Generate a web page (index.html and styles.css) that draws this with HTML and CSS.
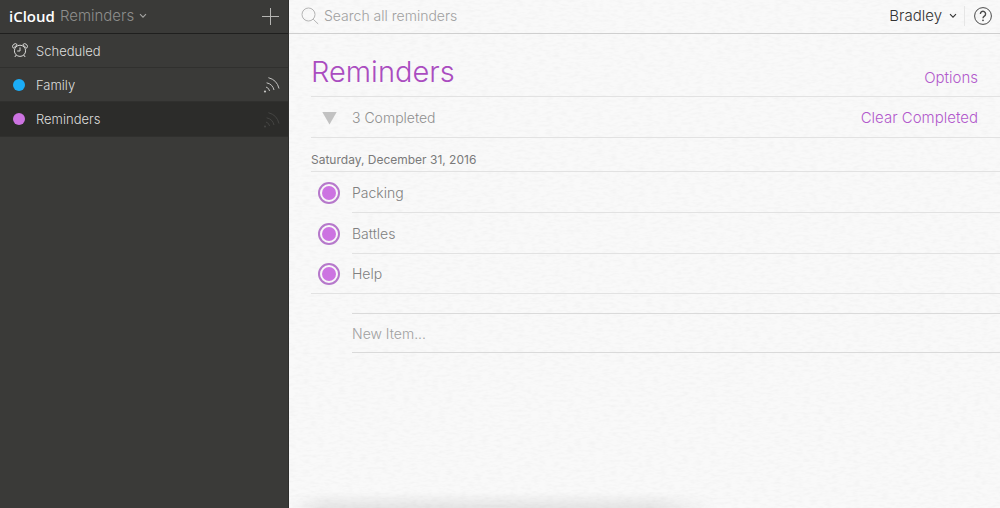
FILE: index.html
```html
<!DOCTYPE html>
<html lang="en">
<head>
<meta charset="utf-8">
<meta name="viewport" content="width=device-width, initial-scale=1">
<title>iCloud Reminders</title>
<link rel="stylesheet" href="styles.css">
</head>
<body>
<div class="app">
  <aside class="sidebar">
    <header class="sidebar-head">
      <button class="switcher" type="button">
        <span class="brand">iCloud</span>
        <span class="app-name">Reminders</span>
        <svg class="chevron" viewBox="0 0 8 6" aria-hidden="true"><path d="M1 1.2 4 4.2 7 1.2"/></svg>
      </button>
      <button class="add" type="button" aria-label="New list">
        <svg viewBox="0 0 17 17" aria-hidden="true"><path d="M8.5 0v17M0 8.5h17"/></svg>
      </button>
    </header>
    <nav class="lists" aria-label="Lists">
      <a class="list" href="#scheduled">
        <svg class="alarm" viewBox="0 0 16 15" aria-hidden="true">
          <circle cx="8" cy="7.8" r="5.6"/>
          <path d="M8 4.4V8H5.2M4.3 12 2.8 14M11.7 12l1.5 2"/>
          <path d="M1.3 5.2A2.4 2.4 0 1 1 5.2 1.6ZM14.7 5.2A2.4 2.4 0 1 0 10.8 1.6Z"/>
        </svg>
        <span class="list-name">Scheduled</span>
      </a>
      <a class="list" href="#family">
        <span class="dot dot-blue"></span>
        <span class="list-name">Family</span>
        <svg class="shared" viewBox="0 0 17 17" aria-hidden="true"><circle cx="2" cy="15.5" r="1.1"/><path d="M3 11a5.2 5.2 0 0 1 3.600 4M3.600 6.800A9.600 9.600 0 0 1 11 14M5.400 1.700A14.500 14.500 0 0 1 16 12.500"/></svg>
      </a>
      <a class="list list-current" href="#reminders" aria-current="page">
        <span class="dot dot-purple"></span>
        <span class="list-name">Reminders</span>
        <svg class="shared shared-off" viewBox="0 0 17 17" aria-hidden="true"><circle cx="2" cy="15.5" r="1.1"/><path d="M3 11a5.2 5.2 0 0 1 3.600 4M3.600 6.800A9.600 9.600 0 0 1 11 14M5.400 1.700A14.500 14.500 0 0 1 16 12.500"/></svg>
      </a>
    </nav>
  </aside>

  <main class="page">
    <svg class="paper" aria-hidden="true">
      <filter id="grain" x="0" y="0" width="100%" height="100%">
        <feTurbulence type="fractalNoise" baseFrequency="0.14 0.4" numOctaves="2" seed="4"/>
        <feColorMatrix values="0 0 0 0 0.5  0 0 0 0 0.5  0 0 0 0 0.5  0.2 0 0 0 -0.08"/>
      </filter>
      <rect width="100%" height="100%" filter="url(#grain)"/>
    </svg>
    <header class="topbar">
      <label class="search">
        <svg class="lens" viewBox="0 0 18 18" aria-hidden="true"><circle cx="7.5" cy="7.5" r="6.5"/><path d="m12.2 12.2 5 4.8"/></svg>
        <input class="search-input" type="search" placeholder="Search all reminders" aria-label="Search all reminders">
      </label>
      <button class="account" type="button">
        <span>Bradley</span>
        <svg class="chevron" viewBox="0 0 8 6" aria-hidden="true"><path d="M1 1.2 4 4.2 7 1.2"/></svg>
      </button>
      <button class="help" type="button" aria-label="Help">
        <svg viewBox="0 0 18 18" aria-hidden="true"><circle cx="9" cy="9" r="8.4"/><path class="mark" d="M6.4 7a2.6 2.6 0 1 1 4 2.1C9.5 9.7 9 10 9 11.2"/><circle class="point" cx="9" cy="13.3" r=".9"/></svg>
      </button>
    </header>

    <div class="content">
      <div class="title-row">
        <h1 class="title">Reminders</h1>
        <button class="action options" type="button">Options</button>
      </div>
      <div class="completed-row">
        <button class="toggle" type="button" aria-label="Hide completed"></button>
        <span class="completed-count">3 Completed</span>
        <button class="action" type="button">Clear Completed</button>
      </div>
      <h2 class="date">Saturday, December 31, 2016</h2>
      <ul class="items">
        <li class="item"><input class="check" type="checkbox" id="packing" checked><label class="item-name" for="packing">Packing</label></li>
        <li class="item"><input class="check" type="checkbox" id="battles" checked><label class="item-name" for="battles">Battles</label></li>
        <li class="item"><input class="check" type="checkbox" id="help" checked><label class="item-name" for="help">Help</label></li>
      </ul>
      <input class="new-item" type="text" placeholder="New Item..." aria-label="New item">
    </div>
  </main>
</div>
</body>
</html>
```

FILE: styles.css
```css
* {
  box-sizing: border-box;
}

body {
  margin: 0;
  font-family: Inter, "Liberation Sans", sans-serif;
  font-size: 14px;
  font-weight: 300;
  line-height: 20px;
}

button,
input {
  margin: 0;
  padding: 0;
  border: 0;
  border-radius: 0;
  background: none;
  font: inherit;
  color: inherit;
  outline: none;
}

svg {
  display: block;
  fill: none;
  stroke: currentColor;
}

.app {
  display: grid;
  grid-template-columns: 289px 1fr;
  min-height: 100vh;
}

/* Sidebar */

.sidebar {
  background: #3a3a38;
  border-right: 1px solid #2f2f2d;
  color: #d9d9d7;
}

.sidebar-head {
  display: flex;
  align-items: center;
  justify-content: space-between;
  height: 34px;
  padding: 0 9px 1px;
  border-bottom: 1px solid #1f1f1e;
}

.switcher {
  display: flex;
  align-items: center;
  gap: 5px;
  font-size: 15px;
}

.brand {
  font-family: "Open Sans", sans-serif;
  font-weight: 600;
  color: #fff;
}

.app-name {
  color: #8e8e8c;
}

.chevron {
  width: 8px;
  height: 6px;
  stroke-width: 1.1;
}

.switcher .chevron {
  color: #a5a5a3;
}

.add svg {
  width: 17px;
  height: 17px;
  color: #b5b5b3;
}

.list {
  display: flex;
  align-items: center;
  height: 34px;
  padding: 0 8px 0 12px;
  border-bottom: 1px solid #30302e;
  color: inherit;
  font-size: 13px;
  text-decoration: none;
}

.list-current {
  height: 35px;
  background: #2c2c2a;
}

.list-name {
  flex: 1;
  color: #dededc;
}

.alarm {
  width: 16px;
  height: 15px;
  margin-right: 8px;
}

.dot {
  width: 12px;
  height: 12px;
  margin: 0 11px 0 1px;
  border-radius: 50%;
}

.dot-blue {
  background: #1badf8;
}

.dot-purple {
  background: #cc73e1;
}

.shared {
  width: 17px;
  height: 17px;
  color: #c4c4c2;
}

.shared circle {
  fill: currentColor;
  stroke: none;
}

.shared-off {
  color: #454543;
}

/* Page */

.page {
  position: relative;
  min-width: 0;
  background: #f9f9f9;
}

/* Soft shade along the lower edge */
.page::after {
  content: "";
  position: absolute;
  bottom: 0;
  left: 0;
  width: 60%;
  height: 16px;
  background: linear-gradient(transparent, rgba(0, 0, 0, 0.08));
  mask-image: linear-gradient(90deg, transparent, #000 8%, #000 85%, transparent);
  pointer-events: none;
}

.paper {
  position: absolute;
  inset: 0;
  width: 100%;
  height: 100%;
  stroke: none;
  pointer-events: none;
}

.topbar,
.content {
  position: relative;
}

.topbar {
  display: flex;
  align-items: center;
  height: 34px;
  padding: 0 8px 1px 12px;
  border-bottom: 1px solid #cfcfcf;
}

.search {
  display: flex;
  flex: 1;
  align-items: center;
  gap: 5px;
}

.lens {
  width: 18px;
  height: 18px;
  color: #b4b4b4;
}

.search-input {
  flex: 1;
  min-width: 0;
  appearance: none;
}

::placeholder {
  color: #a0a0a0;
  opacity: 1;
}

.account {
  display: flex;
  align-items: center;
  gap: 7px;
  padding-right: 7px;
  border-right: 1px solid #e6e6e6;
  color: #333;
  font-size: 15px;
}

.help {
  margin-left: 9px;
}

.help svg {
  width: 18px;
  height: 18px;
  color: #4a4a4a;
}

.help .mark {
  stroke-width: 1.4;
}

.help .point {
  fill: currentColor;
  stroke: none;
}

.content {
  padding-left: 22px;
}

.title-row,
.completed-row {
  display: flex;
  align-items: center;
  padding-right: 22px;
  border-bottom: 1px solid #e2e2e2;
}

.title-row {
  height: 63px;
  padding-top: 14px;
}

.title {
  flex: 1;
  margin: 0;
  font-size: 29px;
  font-weight: 300;
  line-height: 40px;
  color: #aa4cc0;
}

.action {
  color: #b259cc;
  font-size: 15px;
}

.options {
  padding-top: 12px;
}

.completed-row {
  height: 41px;
  padding-top: 2px;
  padding-left: 11px;
}

.toggle {
  width: 15px;
  height: 13px;
  margin-right: 15px;
  background: #c2c2c2;
  clip-path: polygon(0 0, 100% 0, 50% 100%);
}

.completed-count {
  flex: 1;
  color: #8f8f8f;
}

.date {
  margin: 0;
  padding: 12px 0 1px;
  border-bottom: 1px solid #e2e2e2;
  font-size: 12px;
  font-weight: 400;
  color: #7a7a7a;
}

.items {
  margin: 0 0 19px;
  padding: 0;
  border-bottom: 1px solid #e2e2e2;
  list-style: none;
}

.item {
  display: flex;
  align-items: center;
  padding-left: 7px;
}

/* A ring with a filled disc inside it */
.check {
  width: 22px;
  height: 22px;
  margin-right: 12px;
  padding: 2px;
  appearance: none;
  border: 2px solid #b678cb;
  border-radius: 50%;
}

.check:checked {
  background: #cc73e1 content-box;
}

.item-name {
  flex: 1;
  padding: 11px 0 9px;
  border-bottom: 1px solid #e2e2e2;
  color: #808080;
}

.item:last-child .item-name {
  padding: 10px 0 9px;
  border-bottom: 0;
}

.new-item {
  display: block;
  width: calc(100% - 41px);
  height: 40px;
  margin-left: 41px;
  border-top: 1px solid #dadada;
  border-bottom: 1px solid #dadada;
}
```
